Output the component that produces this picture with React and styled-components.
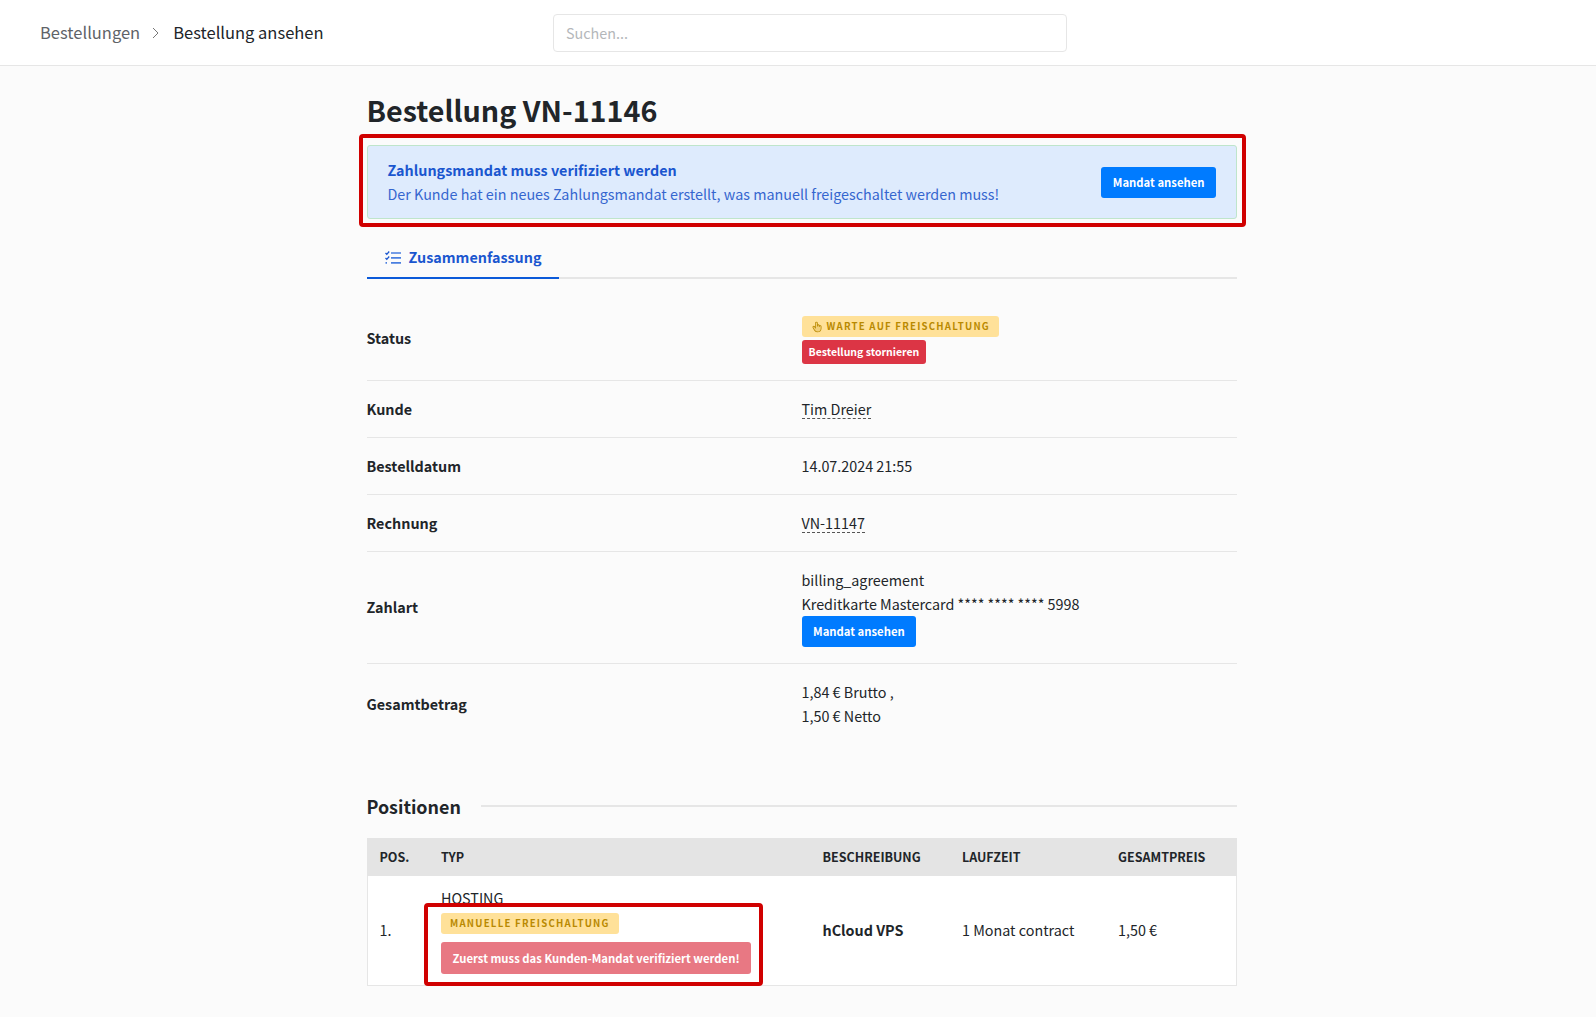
import styled, { createGlobalStyle } from "styled-components";
import { PiHandPointingDuotone } from "react-icons/pi";

const Global = createGlobalStyle`
  * { box-sizing: border-box; }
  html, body { margin: 0; padding: 0; }
  body {
    background: #fbfbfb;
    color: #212529;
    font-family: "Noto Sans CJK SC", "Open Sans", sans-serif;
    font-size: 14.35px;
    line-height: 24px;
  }
`;

const Page = styled.div`
  min-height: 1017px;
  position: relative;
`;

const Header = styled.header`
  height: 66px;
  background: #fff;
  border-bottom: 1px solid #e6e6e6;
  display: flex;
  align-items: center;
  padding: 0 40px;
`;

const Crumbs = styled.div`
  display: flex;
  align-items: center;
  font-size: 16.5px;
  width: 513px;
  margin-top: -2px;
`;

const Crumb = styled.span`
  color: ${(p) => (p.$current ? "#212529" : "#5f6368")};
`;

const CrumbSep = styled.svg`
  width: 10px;
  height: 14px;
  margin: 2px 12px 0 11px;
  stroke: #777;
  fill: none;
`;

const Search = styled.div`
  width: 514px;
  height: 38px;
  background: #fff;
  border: 1px solid #e6e6e6;
  border-radius: 4px;
  padding: 0 12px;
  line-height: 36px;
  color: #b4b7ba;
`;

const Main = styled.main`
  width: 870.5px;
  margin-left: 366.5px;
  padding-top: 24px;
`;

const Title = styled.h1`
  margin: 0;
  font-size: 28.7px;
  line-height: 40px;
  font-weight: 700;
  color: #212529;
`;

const Alert = styled.div`
  margin-top: 15px;
  height: 74px;
  background: #deebfd;
  border: 1px solid #bfe5cb;
  border-radius: 3px;
  padding: 0 20px;
  display: flex;
  align-items: center;
  justify-content: space-between;
`;

const AlertTitle = styled.div`
  font-weight: 700;
  color: #1a56cf;
`;

const AlertText = styled.div`
  color: #3566cf;
`;

const Tabs = styled.div`
  margin-top: 15px;
  height: 45px;
  border-bottom: 2px solid #e6e6e6;
`;

const Tab = styled.div`
  width: 192px;
  height: 45px;
  border-bottom: 2px solid #0b5ad9;
  display: flex;
  align-items: center;
  gap: 8px;
  padding: 3px 0 0 18px;
  color: #1a56cf;
  font-weight: 700;
`;

const Details = styled.div`
  margin-top: 26px;
`;

const Row = styled.div`
  display: grid;
  grid-template-columns: 435px 1fr;
  align-items: center;
  padding: ${(p) => p.$pad || "16px 0"};
  border-bottom: ${(p) => (p.$last ? "none" : "1px solid #e6e6e6")};
`;

const Label = styled.div`
  font-weight: 700;
  padding-bottom: ${(p) => p.$lift || "0"};
`;

const Value = styled.div`
  display: flex;
  flex-direction: column;
  align-items: flex-start;
`;

const Dashed = styled.span`
  border-bottom: 1px dashed #555;
  line-height: 19px;
  display: inline-block;
`;

const Badge = styled.span`
  display: inline-flex;
  align-items: center;
  gap: 4px;
  height: 21px;
  padding: 0 9px;
  background: #ffe199;
  color: #b98900;
  border-radius: 3px;
  font-size: 9.6px;
  font-weight: 700;
  letter-spacing: 1.25px;
  text-transform: uppercase;
  line-height: 21px;
`;

const Button = styled.span`
  display: inline-block;
  color: #fff;
  font-weight: 700;
  border-radius: 3px;
  background: ${(p) => p.$bg || "#007bff"};
  font-size: ${(p) => p.$size || "11.3px"};
  height: ${(p) => p.$height || "31px"};
  line-height: ${(p) => p.$height || "31px"};
  padding: 0 ${(p) => p.$padX || "11.5px"};
  margin-top: ${(p) => p.$top || "0"};
`;

const SectionHead = styled.div`
  margin-top: 46.5px;
  display: flex;
  align-items: center;
  gap: 20px;
`;

const SectionTitle = styled.h2`
  margin: 0;
  font-size: 17.9px;
  line-height: 30px;
  font-weight: 700;
`;

const SectionRule = styled.div`
  flex: 1;
  height: 2px;
  background: #e6e6e6;
`;

const Table = styled.div`
  margin-top: 17px;
  border: 1px solid #e6e6e6;
  background: #fff;
`;

const TableRow = styled.div`
  display: grid;
  grid-template-columns: 61.5px 381.5px 139.5px 156px 1fr;
  align-items: center;
  padding-left: 12px;
`;

const HeadRow = styled(TableRow)`
  height: 38px;
  background: #e4e4e4;
  font-size: 12.5px;
  font-weight: 700;
  margin: -1px -1px 0 -1px;
  padding-left: 13px;
`;

const BodyRow = styled(TableRow)`
  height: 109px;
`;

const TypeCell = styled.div`
  display: flex;
  flex-direction: column;
  align-items: flex-start;
`;

const TypeBadge = styled(Badge)`
  margin-top: 3px;
`;

const Strong = styled.span`
  font-weight: 700;
`;

const Marker = styled.div`
  position: absolute;
  left: ${(p) => p.$x}px;
  top: ${(p) => p.$y}px;
  width: ${(p) => p.$w}px;
  height: ${(p) => p.$h}px;
  border: 4px solid #d00000;
  border-radius: 4px;
  pointer-events: none;
`;

const TasksIcon = () => (
  <svg width="16" height="13" viewBox="0 0 16 13" fill="none">
    <path d="M0.5 2l1.3 1.3L4.2 0.5M0.5 7l1.3 1.3 2.4-2.8" stroke="#1a56cf" strokeWidth="1.3" />
    <path d="M0.5 11.8h1.5M6 2h10M6 6.8h10M6 11.8h10" stroke="#4a7fe0" strokeWidth="1.7" />
  </svg>
);

export default function App() {
  return (
    <Page>
      <Global />
      <Header>
        <Crumbs>
          <Crumb>Bestellungen</Crumb>
          <CrumbSep viewBox="0 0 10 14"><path d="M2 2l5 5-5 5" /></CrumbSep>
          <Crumb $current>Bestellung ansehen</Crumb>
        </Crumbs>
        <Search>Suchen...</Search>
      </Header>
      <Main>
        <Title>Bestellung VN-11146</Title>
        <Alert>
          <div>
            <AlertTitle>Zahlungsmandat muss verifiziert werden</AlertTitle>
            <AlertText>Der Kunde hat ein neues Zahlungsmandat erstellt, was manuell freigeschaltet werden muss!</AlertText>
          </div>
          <Button>Mandat ansehen</Button>
        </Alert>
        <Tabs>
          <Tab><TasksIcon />Zusammenfassung</Tab>
        </Tabs>
        <Details>
          <Row $pad="11px 0 16px">
            <Label $lift="4px">Status</Label>
            <Value>
              <Badge><PiHandPointingDuotone size={12} />Warte auf Freischaltung</Badge>
              <Button $bg="#dc3545" $height="24px" $padX="7px" $top="3px" $size="10.5px">Bestellung stornieren</Button>
            </Value>
          </Row>
          <Row>
            <Label>Kunde</Label>
            <Value><Dashed>Tim Dreier</Dashed></Value>
          </Row>
          <Row>
            <Label>Bestelldatum</Label>
            <Value>14.07.2024 21:55</Value>
          </Row>
          <Row>
            <Label>Rechnung</Label>
            <Value><Dashed>VN-11147</Dashed></Value>
          </Row>
          <Row>
            <Label $lift="2px">Zahlart</Label>
            <Value>
              <div>billing_agreement</div>
              <div>Kreditkarte Mastercard **** **** **** 5998</div>
              <Button>Mandat ansehen</Button>
            </Value>
          </Row>
          <Row $last>
            <Label>Gesamtbetrag</Label>
            <Value>
              <div>1,84 € Brutto ,</div>
              <div>1,50 € Netto</div>
            </Value>
          </Row>
        </Details>
        <SectionHead>
          <SectionTitle>Positionen</SectionTitle>
          <SectionRule />
        </SectionHead>
        <Table>
          <HeadRow>
            <span>POS.</span>
            <span>TYP</span>
            <span>BESCHREIBUNG</span>
            <span>LAUFZEIT</span>
            <span>GESAMTPREIS</span>
          </HeadRow>
          <BodyRow>
            <span>1.</span>
            <TypeCell>
              <span>HOSTING</span>
              <TypeBadge>Manuelle Freischaltung</TypeBadge>
              <Button $bg="#e87883" $height="32px" $top="8px" $size="11.3px">Zuerst muss das Kunden-Mandat verifiziert werden!</Button>
            </TypeCell>
            <Strong>hCloud VPS</Strong>
            <span>1 Monat contract</span>
            <span>1,50 €</span>
          </BodyRow>
        </Table>
      </Main>
      <Marker $x={358.5} $y={134} $w={887.5} $h={93} />
      <Marker $x={424} $y={903} $w={339} $h={83} />
    </Page>
  );
}
